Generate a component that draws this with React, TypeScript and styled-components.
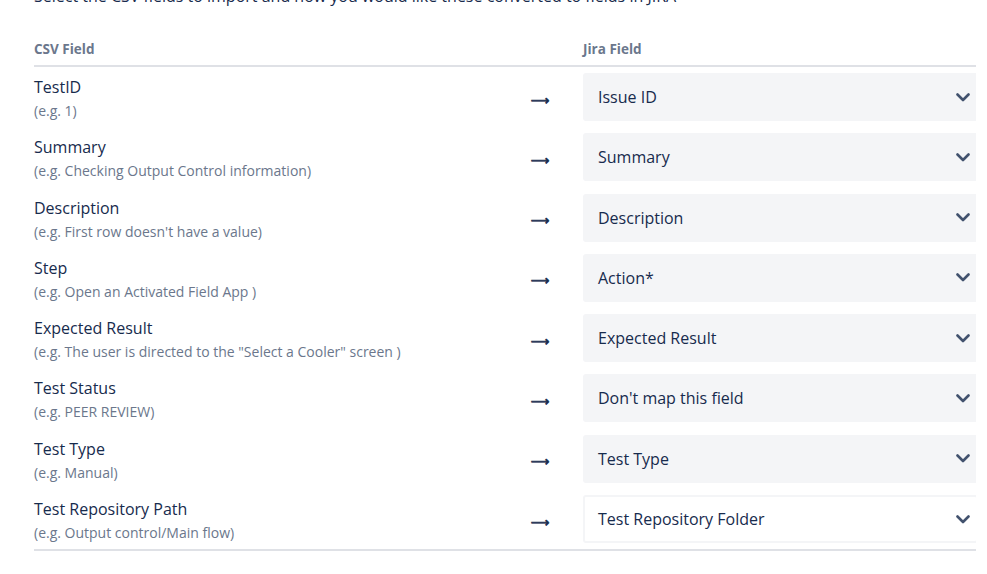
import React from 'react'
import styled, { createGlobalStyle } from 'styled-components'

const GlobalStyle = createGlobalStyle`
  body {
    margin: 0;
    background: #fff;
    font-family: 'Open Sans', 'Noto Sans', sans-serif;
    color: #172b4d;
  }
`

const Page = styled.div`
  width: 942px;
  padding-left: 34px;
  overflow: hidden;
`

const Intro = styled.p`
  margin: -14px 0 0;
  font-size: 16px;
  line-height: 20px;
  white-space: nowrap;
  color: #172b4d;
`

const Table = styled.div`
  width: 944px;
  margin-top: 34px;
  border-bottom: 2px solid #dfe1e6;
`

const Row = styled.div<{ $head?: boolean }>`
  display: grid;
  grid-template-columns: 463px 86px 395px;
  align-items: center;
  padding: ${(p) => (p.$head ? '1px 0 8px' : '6px 0 6.3px')};
  border-bottom: ${(p) => (p.$head ? '2px solid #dfe1e6' : 'none')};
`

const HeadCell = styled.div`
  font-size: 13.5px;
  font-weight: 700;
  line-height: 16px;
  color: #6b778c;
`

const FieldCell = styled.div`
  align-self: start;
  padding-top: 4px;
`

const FieldName = styled.div`
  font-size: 16px;
  line-height: 20px;
  color: #172b4d;
`

const FieldHint = styled.div`
  margin-top: 5px;
  font-size: 14px;
  line-height: 18px;
  color: #6b778c;
`

const Arrow = styled.div`
  text-align: center;
  font-family: 'DejaVu Sans', sans-serif;
  font-size: 13px;
  line-height: 20px;
  padding-top: 7px;
  color: #172b4d;
  -webkit-text-stroke: 0.7px #172b4d;
`

const Select = styled.div<{ $plain?: boolean }>`
  display: flex;
  align-items: center;
  justify-content: space-between;
  height: 48px;
  box-sizing: border-box;
  padding: 0 6px 0 13px;
  border-radius: 3px;
  border: 2px solid #f4f5f7;
  background: ${(p) => (p.$plain ? '#fff' : '#f4f5f7')};
  font-size: 16px;
  color: #172b4d;
`

const Chevron = () => (
  <svg width="14" height="9" viewBox="0 0 14 9" fill="none">
    <polyline
      points="1.5,1.5 7,7 12.5,1.5"
      stroke="#42526e"
      strokeWidth="2.6"
      strokeLinecap="round"
      strokeLinejoin="round"
    />
  </svg>
)

const rows = [
  { name: 'TestID', hint: '(e.g. 1)', jira: 'Issue ID' },
  { name: 'Summary', hint: '(e.g. Checking Output Control information)', jira: 'Summary' },
  { name: 'Description', hint: "(e.g. First row doesn't have a value)", jira: 'Description' },
  { name: 'Step', hint: '(e.g. Open an Activated Field App )', jira: 'Action*' },
  {
    name: 'Expected Result',
    hint: '(e.g. The user is directed to the "Select a Cooler" screen )',
    jira: 'Expected Result',
  },
  { name: 'Test Status', hint: '(e.g. PEER REVIEW)', jira: "Don't map this field" },
  { name: 'Test Type', hint: '(e.g. Manual)', jira: 'Test Type' },
  {
    name: 'Test Repository Path',
    hint: '(e.g. Output control/Main flow)',
    jira: 'Test Repository Folder',
    plain: true,
  },
]

export default function App() {
  return (
    <>
      <GlobalStyle />
      <Page>
        <Intro>
          Select the CSV fields to import and how you would like these converted to fields in JIRA
        </Intro>
        <Table>
          <Row $head>
            <HeadCell>CSV Field</HeadCell>
            <div />
            <HeadCell>Jira Field</HeadCell>
          </Row>
          {rows.map((r) => (
            <Row key={r.name}>
              <FieldCell>
                <FieldName>{r.name}</FieldName>
                <FieldHint>{r.hint}</FieldHint>
              </FieldCell>
              <Arrow>⟶</Arrow>
              <Select $plain={r.plain}>
                <span>{r.jira}</span>
                <Chevron />
              </Select>
            </Row>
          ))}
        </Table>
      </Page>
    </>
  )
}
